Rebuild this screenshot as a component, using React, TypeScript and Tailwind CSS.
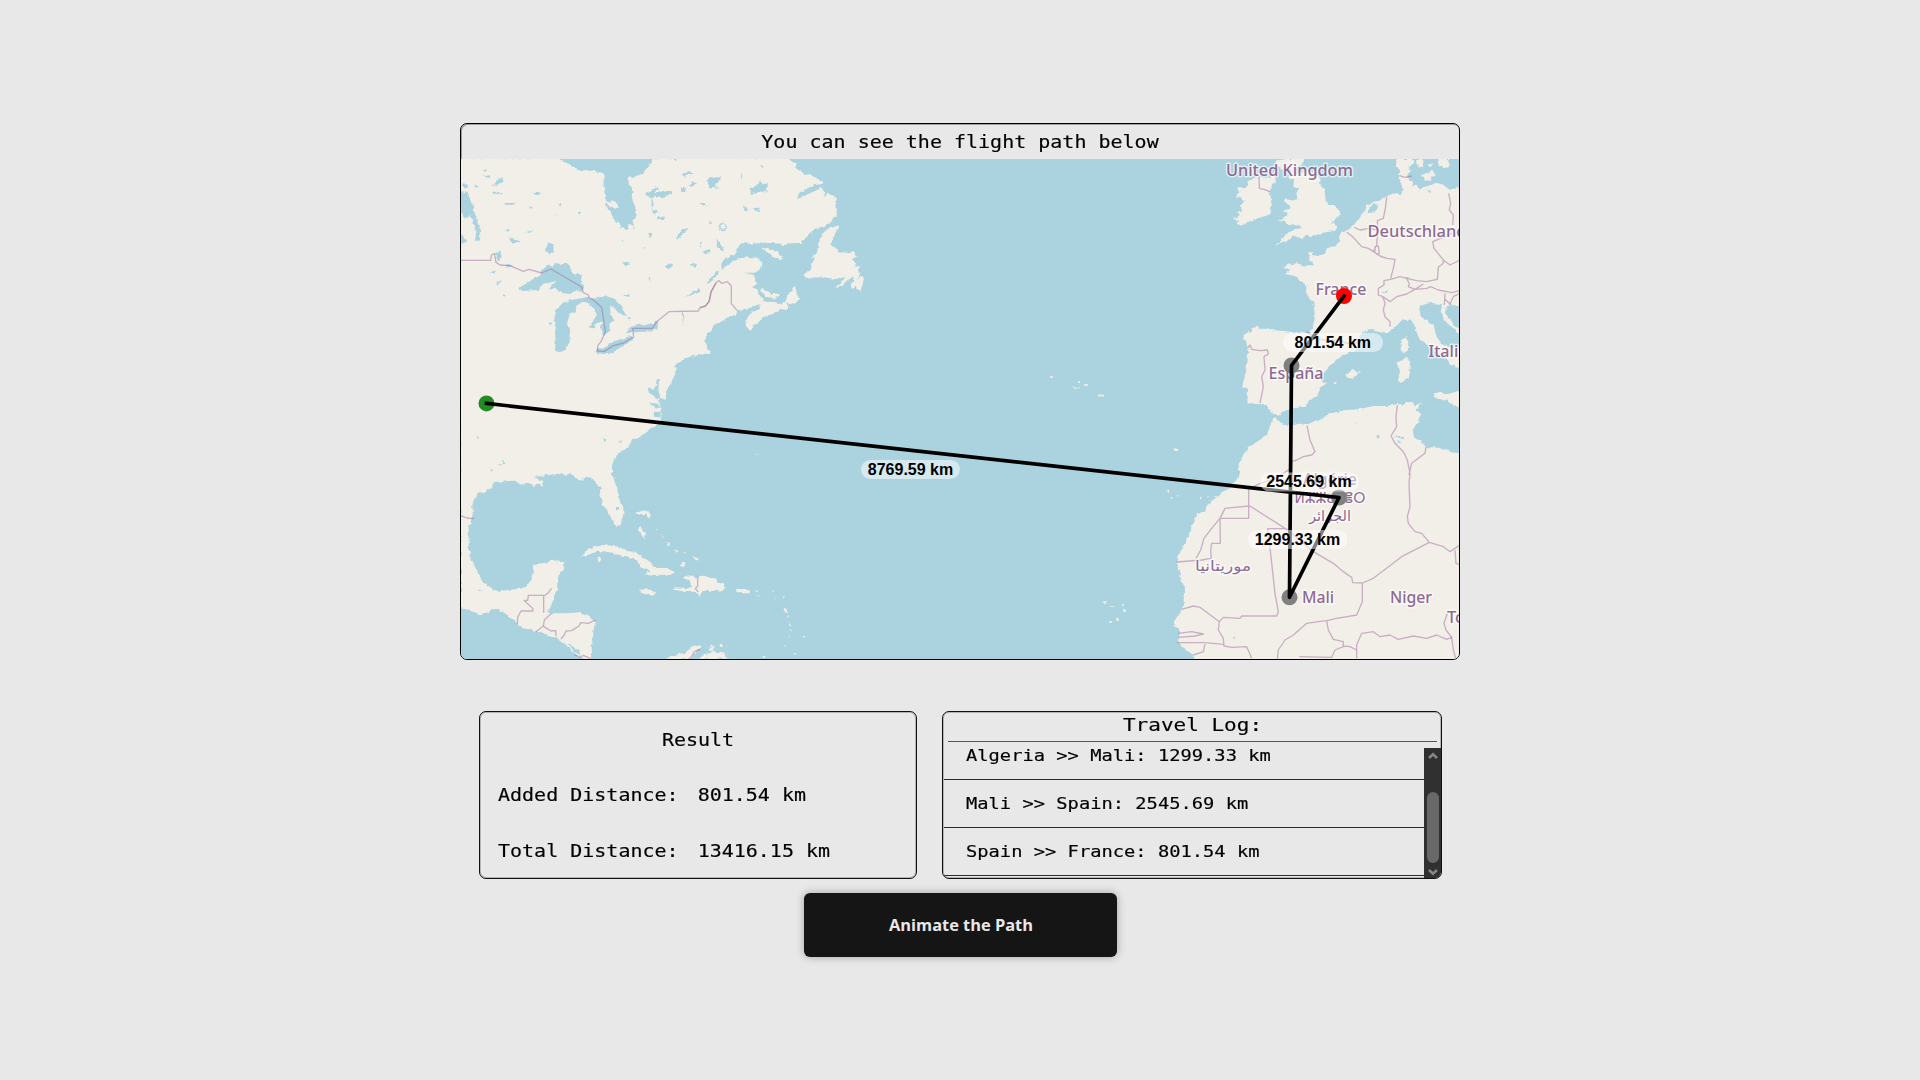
import React from "react";

const LAND = "#f2efe9";
const WATER = "#aad3df";

const mono = "font-['DejaVu_Sans_Mono',monospace] text-black";

// Wide, low letterforms: full advance width with a reduced height.
const squat = "inline-block whitespace-pre scale-y-[0.88] [-webkit-text-stroke:0.2px_#000]";

type Group = { at: string; land: string[]; water: string[]; borders: string[] };

// Each sheet is traced at three units per pixel and placed by its own origin.
const sheets: Group[] = [
  {
    at: "translate(455 115) scale(0.33333)",
    land: [
      "M15,130H310L326,140 345,148 360,158 378,166 405,166 430,170 447,176 450,184 446,196 446,215 451,232 450,250 455,260 450,270 456,282 468,291 468,302 482,314 490,325 496,338 506,337 512,345 517,342 522,325 530,330 537,340 539,332 533,322 540,312 545,300 540,290 541,275 536,265 530,245 532,228 529,215 521,208 521,197 515,190 530,187 548,182 562,174 576,160 586,145 592,132V130H800V618L775,632 768,650 752,660 754,672 745,680 752,690 750,700 765,707 768,717 745,716 720,722 690,730 668,745 660,750 664,760 662,775 652,795 645,810 636,823 632,850H15Z",
      "M452,262L470,259 485,264 492,280 475,277 458,270Z",
    ],
    water: [
      "M15,225L26,232 38,230 42,245 50,258 55,280 62,300 68,325 78,345 77,360 70,378 60,376 64,350 60,338 52,325 55,315 40,300 36,312 20,298 15,296Z",
      "M15,355L27,365 36,378 28,386 15,387Z",
      "M188,524L215,500 250,485 262,466 283,450 295,455 300,443 318,448 342,446 350,470 362,485 363,476 382,478 378,495 388,515 382,530 360,525 345,534 312,530 300,518 282,521 305,497 285,503 262,510 248,525 208,528Z",
      "M272,390L283,382 295,389 296,412 284,419 271,408Z",
      "M300,705L302,680 300,655 304,628 298,612 310,590 322,570 345,556 378,550 400,547 425,551 450,543 480,552 498,570 513,603 495,598 480,582 465,572 468,598 476,615 464,625 463,650 445,662 438,640 441,620 426,625 416,640 403,638 418,615 424,590 410,574 395,562 375,566 365,572 360,592 345,596 336,625 341,640 345,670 336,702 316,712Z",
      "M296,612L305,585 325,562 336,558 318,585Z",
      "M420,712L430,695 440,702 470,682 505,670 530,662 534,676 500,695 462,717 440,716Z",
      "M513,655L530,634 560,628 590,627 610,618 607,640 590,649 540,652Z",
      "M690,550L715,530 745,517 765,492 790,466V482L765,515 748,521 718,536Z",
      "M665,380L668,358 682,342 697,340 690,352 678,362Z",
      "M112,214L128,195 145,186 142,200 128,208Z",
      "M162,370L180,376 200,378 185,385 168,381Z",
      "M233,230L252,231 254,240 240,239Z",
      "M570,238L590,228 600,214 612,220 600,232 650,228 652,236 620,246 600,243 590,250Z",
      "M590,250L596,265 592,285 612,290 604,300 590,290Z",
      "M680,180L705,168 712,174 690,185ZM675,222L688,218 692,230 680,232ZM702,212L714,198 726,206 710,215Z",
      "M755,200L770,188 780,190V228L765,215Z",
      "M606,306L630,305 628,312 608,312ZM580,358L592,353 594,362 584,366ZM628,456L645,443 655,452 640,462ZM708,448L720,444 726,455 716,459Z",
      "M500,440L512,438 525,448 512,454ZM112,230L138,231 136,236 114,236ZM148,264L178,264 178,269 150,269ZM55,212L74,213 72,217 57,217Z",
      "M104,474L122,466 118,478ZM120,415L136,405 140,430 125,440ZM215,350L238,346 222,354ZM150,345L165,342 160,350ZM152,444L174,452 160,458Z",
      "M82,184L104,181 102,188ZM82,166L98,163 96,172ZM24,205L40,208 36,220 20,214ZM218,276L232,275 230,281ZM295,300L308,299 308,304ZM310,264L318,264 317,276Z",
      "M746,262L758,268 752,278ZM742,405L765,410 752,418ZM565,395L572,398 570,404ZM580,488L586,486 586,500ZM500,540L524,540 520,546ZM518,605L528,607 524,614ZM680,590H687L684,636Z",
      "M142,538L154,541 150,550ZM122,506L138,495 130,512ZM283,620L292,622 288,632ZM369,291H375V301H369ZM742,375L750,360 747,390ZM500,375L505,376 503,384ZM655,130L665,130 662,137ZM505,132L530,132 512,140Z",
    ],
    borders: [
      "M18,436H107L109,420 118,416 123,442 135,450 165,452 205,469 222,463 260,474 288,462 380,516 385,533 400,540 402,548 415,555 440,577 446,615 451,650 438,680 428,692 428,708 447,710 475,692 505,684 536,666 533,640H592L605,620 642,590 730,588 735,578 752,572 762,560 768,530 783,505",
    ],
  },
  {
    at: "translate(700 115) scale(0.33333)",
    land: [
      "M20,130H265L278,142 290,145 286,158 300,168 312,180 330,178 345,188 372,200 362,208 345,210 325,218 310,228 296,235 288,252 305,248 322,238 345,228 362,216 373,228 370,245 385,235 398,242 410,252 406,275 411,300 400,312 385,330 365,336 345,342 328,355 318,370 300,384 275,385 255,390 220,384 190,383 160,386 125,385 112,395 105,420 88,425 70,435 55,455 40,470 28,495 15,515 0,523 20,517 32,502 50,480 68,462 85,447 105,437 120,430 150,427 172,428 187,440 186,455 172,470 160,474 130,471 150,477 165,485 166,498 173,505 158,515 172,525 178,542 192,552 185,562 165,575 140,580 112,588 108,600 90,602 70,615 50,625 30,632 22,645 0,670V130Z",
      "M0,520L30,505V650H0Z M0,640L15,655 10,675 20,690 22,705 36,712 20,714 12,706 0,708Z",
      "M182,398L205,400 232,412 252,430 238,432 215,424 200,410Z",
      "M186,514L195,528 215,538 240,534 242,542 215,552 195,540 183,528Z",
      "M175,552L192,560 220,561 245,568 257,560 266,575 262,585 240,582 225,595 208,600 188,607 177,620 162,630 156,642 148,646 138,634 136,615 155,592 180,582Z",
      "M285,512L292,525 289,540 302,550 288,562 272,567 257,560 262,540 274,530Z",
      "M412,330L416,342 408,350 402,365 392,390 402,395 415,405 410,415 430,412 445,415 460,408 470,425 455,432 468,445 462,455 482,453 474,465 478,482 472,495 486,482 492,490 483,527 470,522 468,512 455,520 452,508 463,498 460,485 440,497 430,510 405,518 425,500 432,485 415,492 390,490 370,488 345,487 316,492 315,478 328,467 337,445 345,430 333,430 350,415 357,385 372,350 392,335 402,338Z",
    ],
    water: [
      "M20,192L45,186 62,188 60,198 45,210 58,220 40,215 30,222 25,208Z",
      "M152,216L172,212 182,195 192,210 206,206 198,220 202,235 188,228 165,235 152,240Z",
      "M50,370L58,385 70,400 66,408 52,398ZM10,412L28,402 34,410 18,418ZM0,260L14,264 20,275 8,270ZM134,270L142,280 140,290 132,286ZM160,278L176,278 186,288 165,287ZM180,150L190,152 188,160ZM122,175L130,182 126,198ZM28,318L36,322 32,330ZM0,380L6,384 0,398Z",
      "M56,336a13,13 0 1,0 26,0a13,13 0 1,0 -26,0ZM61,336a8,8 0 1,1 16,0a8,8 0 1,1 -16,0Z",
    ],
    borders: ["M0,578L15,575 28,558 34,530 48,503 57,497 65,505 82,500 94,512V565L111,586"],
  },
  {
    at: "translate(455 380) scale(0.33333)",
    land: [
      "M15,-5H640L630,20 622,40 616,60 608,62 616,85 620,105 614,125 600,140 580,150 565,165 548,174 530,180 525,195 508,210 490,222 478,238 471,255 471,280 477,300 484,325 492,345 494,362 505,382 505,402 499,425 497,436 480,437 474,422 462,408 456,388 440,375 442,358 433,348 438,325 425,310 410,293 395,290 375,303 362,292 348,281 330,284 312,281 300,287 285,281 262,288 237,290 250,298 264,302 266,320 245,312 238,318 225,308 200,315 180,302 150,303 130,309 118,305 110,322 90,335 72,338 60,352 52,375 53,400 48,425 41,440 41,480 41,510 52,545 70,580 82,605 110,625 130,636 160,629 200,626 215,618 228,600 233,580 235,558 250,551 270,548 295,541 310,545 328,547 326,565 311,585 306,605 307,625 297,650 288,680 275,698 300,700 340,700 370,697 388,704 402,708 410,718 424,725 416,745 412,790 408,838H390L365,825 345,808 328,790 308,775 270,765 240,752 205,745 185,728 165,712 150,700 130,687 112,688 95,698 75,703 50,694 18,685Z",
      "M612,-5L640,-5 637,25 624,60 618,40 610,12Z",
      "M380,532L392,515 410,503 450,494 490,500 512,512 540,516 560,530 585,545 600,562 640,567 660,577 645,585 595,584 570,587 585,572 555,560 545,542 520,530 480,522 455,514 425,515Z",
      "M552,630L575,627 605,638 600,644 570,643Z",
      "M427,532L436,530 440,541 430,544Z",
      "M680,593L700,586 720,592 745,587 785,600V632H740L732,648 720,635 690,636 652,628 660,622 700,625 712,618 700,600Z",
      "M556,438L568,458 572,478 560,462 552,450ZM675,553L692,546 688,558 674,558ZM712,530L732,536 720,538Z",
      "M540,398L570,391 585,402 582,418 576,402 545,402Z",
      "M632,838L650,828 690,818 705,806 725,794 740,798 722,815 710,838ZM733,838L750,825 785,815V838ZM764,802L775,796 775,812 766,812Z",
    ],
    water: [
      "M480,378H490L493,388 482,392ZM582,22L600,30 606,-5H612L610,30 618,58 600,50 578,35ZM582,66L608,72 616,84 598,82ZM596,95L618,96 616,112 598,110ZM338,793L350,797 372,812 380,828 362,818Z",
      "M64,168L74,172 68,178ZM138,240H145L152,256 144,252ZM105,268L115,270 110,275ZM130,257L138,252 136,260ZM440,174L454,178 448,184ZM490,182L502,182 502,188ZM68,628L80,632 76,638Z",
    ],
    borders: [
      "M18,407L36,414 58,416",
      "M290,625L278,640 270,646H220L218,661H207L234,686V693H198L188,712 187,733M266,646V698M290,700L268,720 265,738 243,755M265,738L275,745 288,753 302,752 303,768M318,777L328,765 333,753 350,752 372,738 377,728 400,730 422,720M358,824L375,832 385,826 407,836M728,592V618L721,626 730,636M736,808L718,815 710,830 700,838",
    ],
  },
  {
    at: "translate(640 380) scale(0.33333)",
    land: [
      "M172,592L190,587 215,595 230,607 250,612 258,625 250,632 220,630 188,633 178,648 168,636Z",
      "M288,627H328L326,640H290Z",
      "M178,836L192,822 230,816 255,822 262,836Z",
      "M430,650l5,0 -2,6zM430,686l12,0 2,10 -8,2zM438,706l6,4 0,5zM446,726l10,10 -2,4zM448,748h8v6zM442,768h6v4zM486,768h8v6zM430,798h8v4zM395,634h6v4zM403,654l6,4 -2,2zM345,630h10l-4,3zM350,645h8v3zM238,795h10v6l-6,0zM254,797h8v5zM365,828h12l-4,6zM458,820h8v4z",
      "M20,392l12,10 -4,14 -6,-2zM38,428l6,6zM46,440l8,10 -4,0zM62,460l10,14 -6,0zM96,468l6,4zM76,484l14,12 -6,2zM102,505l10,6 -4,12zM130,518l8,-4 -2,6zM162,530l14,8 -6,0zM348,222l8,0 -4,3z",
    ],
    water: [],
    borders: [],
  },
  {
    at: "translate(1160 150) scale(0.33333)",
    land: [
      "M228,140L238,125 232,112 255,112 265,108 262,92 285,84 300,80 315,84 340,78 347,95 335,108 325,125 332,140 335,165 328,195 305,200 290,206 270,212 258,222 245,227 228,220 238,212 222,208 240,195 230,187 248,180 240,172 252,150 240,144Z",
      "M378,27H432L430,38 410,52 405,75 430,62 470,70 482,88 480,100 492,118 496,140 497,152 508,165 525,165 538,175 540,190 530,203 515,215 532,232 525,243 500,246 480,250 455,258 440,256 425,265 410,257 395,262 385,275 368,275 345,288 360,272 370,262 385,248 405,237 425,235 420,228 405,222 390,226 375,215 357,213 372,205 383,195 380,185 368,180 388,178 388,162 372,155 375,145 395,152 412,148 410,138 417,115 400,112 402,90 385,85 395,60 365,55 345,45 350,32Z",
      "M710,27H755L765,40 745,50 752,62 742,75 742,88 758,95 755,108 775,108 780,118 810,105 830,98 850,105 870,120 900,112V470L870,462 858,468 855,490 872,510 885,530 900,535V555L880,535 862,520 850,505 845,480 845,462 830,464 815,458 798,462 780,468 778,478 783,500 800,510 822,530 830,560 845,582 865,590 900,592V660L870,642 850,618 825,605 810,590 788,575 775,560 768,540 765,522 750,512 728,508 712,525 692,540 680,552 655,545 635,540 608,545 598,560 605,575 600,595 575,605 545,618 520,640 508,650 495,665 480,680 484,692 498,700 480,715 475,730 470,742 450,748 435,770 400,775 375,780 355,795 342,795 330,782 318,762 300,763 262,758 264,735 262,715 247,710 250,695 258,665 262,640 265,600 260,580 250,555 270,545 275,535 290,530 330,540 370,543 420,548 450,546 458,535 465,500 462,475 460,455 445,440 438,425 440,405 420,392 405,378 375,372 388,362 368,352 380,345 410,340 435,347 462,345 450,330 445,310 460,305 455,315 475,318 495,312 500,295 525,288 538,275 540,250 560,242 575,232 595,210 608,190 620,165 640,155 655,152 680,140 700,130 722,135 728,122 722,95 715,75 722,62 708,48Z",
      "M768,27L790,30 790,50 775,52ZM785,75L800,68 815,62 828,72 810,82 815,92 795,92ZM800,45L820,40 812,52ZM835,27H868L866,50 850,55 838,45Z",
      "M738,560L745,575 743,600 732,610 722,600 722,572ZM740,620L750,635 747,685 722,698 714,692 720,665 710,640Z",
      "M820,735L840,728 865,732 900,722V768L885,770 860,752 830,745ZM555,676L578,660 596,672 574,687 565,682ZM592,662L606,666 600,670ZM520,700L530,695 528,706Z",
    ],
    water: [
      "M655,165L640,160 622,185 632,190 650,180ZM735,382L748,380 745,388ZM665,428L685,420 678,430ZM800,122L812,120 806,128Z",
    ],
    borders: [
      "M297,82L298,115 312,118 330,125M680,142L676,175 670,205 652,212 653,240 650,285 640,305M583,232L600,240 628,235 652,240M560,247L580,262 605,290 625,295 640,305 660,318 680,325 705,328 700,355 692,385M645,305L645,290 655,288 658,310 648,312M718,77L735,82 755,78M866,130L872,160 868,180 880,195 878,225M875,250L850,262 818,275 822,295 850,330 850,340M850,330L870,345 900,330M850,340L835,352 832,388 800,395 770,392 740,385 720,380 692,388 672,392 672,405 655,415 655,435 668,440 690,455 710,440 740,432 765,418 790,402M740,385L748,402 745,410 765,418M765,418L800,415 812,410 835,420 875,428 900,422M668,440L675,460 670,480 675,500 690,515 690,530M855,430L853,465M855,448L870,462 880,440 900,430",
      "M262,595L270,585 275,598 300,602 322,600 325,612 312,620 315,660 305,680 310,710 300,760M440,545L470,565 500,572 540,570 560,580 602,578",
    ],
  },
  {
    at: "translate(1160 400) scale(0.33333)",
    land: [
      "M345,50L362,68 385,76 410,70 440,75 465,62 490,56 510,40 560,30 600,27 640,18 680,18 715,12 735,15 740,5 755,8 765,15 788,10 770,28 782,42 778,62 758,90 762,110 790,128 800,142 840,142 870,155 900,160V780H105L90,755 65,745 52,718 60,700 50,682 40,668 58,640 72,615 70,590 75,560 60,540 62,520 50,495 55,470 72,435 90,400 103,360 110,345 135,330 150,305 180,285 205,265 228,242 240,225 235,195 252,160 270,138 300,120 322,100 335,65Z",
      "M220,305l16,-14 6,0 -8,14 -10,6zM165,290l16,-4 -4,10 -8,4zM120,285l6,8 -5,6zM22,270l4,8zM40,147l14,2 -6,5zM50,285l6,1 -3,4zM138,290h10l-6,6zM30,292h6v5zM22,269l6,0 0,9 -4,1zM870,-2L900,0V22Z",
    ],
    water: [
      "M700,110L730,108 735,113 705,114ZM710,124H722V128H710ZM650,105H658V112H650ZM582,68H592L588,72ZM870,710H878V718H870ZM220,710H226V716H220ZM66,760L76,755 80,762 70,768Z",
    ],
    borders: [
      "M441,77L450,120 465,155 455,165 430,170 410,180 395,185 393,205 370,220 350,235 300,250 266,268V355H180L181,430H155L152,450 154,475 125,480 50,486M265,318L195,325 180,355 155,385 132,415 122,450 108,475M265,315L380,388 460,455 520,490 550,515 575,532 578,548 607,549 640,535 725,470 808,427 785,400 765,395 745,370 742,350 750,320 747,250 750,220 742,180 730,155 705,130 693,108 710,80 708,50 712,15M747,225L755,190 795,160 798,140M808,427L850,440 870,455 900,435M885,450L888,490 900,495M607,549V605L590,645 530,655 500,662 475,665 440,670 400,705 375,720 355,750 352,778M380,386H323L333,470 345,580 355,635 350,648H245L240,655 190,652 178,665 120,622 100,618 65,628M178,665L175,690 190,715 192,738 215,742 260,740 275,775M55,700L95,695 130,702 105,708 55,712M52,728H135L190,733M135,732L130,755 100,765M500,662L505,690 520,718 550,725 550,740 525,750 515,772 418,770M550,738L570,740 590,750M590,775L590,735 605,700 640,695 660,710 690,705 715,718 760,708 800,715 830,705 860,718 875,712 858,690 852,670 862,640M875,712L880,750 888,778",
    ],
  },
];

type Place = { name: string; x: number; y: number; w?: number; size?: number; arabic?: boolean };

const places: Place[] = [
  { name: "United Kingdom", x: 1289.5, y: 175.5, w: 127 },
  { name: "Deutschland", x: 1417, y: 236.5, w: 99 },
  { name: "France", x: 1341, y: 294.5, w: 51 },
  { name: "España", x: 1296, y: 378.5, w: 55 },
  { name: "Italia", x: 1448, y: 357, w: 39 },
  { name: "Algérie", x: 1330, y: 484.5, w: 54 },
  { name: "ⵍⵣⵣⴰⵢⴻⵔ", x: 1330, y: 502.5, w: 71, size: 14.5, arabic: true },
  { name: "الجزائر", x: 1330, y: 521, w: 42, size: 15, arabic: true },
  { name: "موريتانيا", x: 1223, y: 571, w: 56, size: 15, arabic: true },
  { name: "Mali", x: 1318, y: 603, w: 32 },
  { name: "Niger", x: 1411, y: 603, w: 42 },
  { name: "Tchad", x: 1470, y: 623, w: 46 },
];

const stops = [
  { x: 486.5, y: 403.4, fill: "#228b22" },
  { x: 1339, y: 497.5, fill: "#808080" },
  { x: 1289.5, y: 597.3, fill: "#808080" },
  { x: 1291.5, y: 365.5, fill: "#808080" },
  { x: 1344, y: 296, fill: "#ff0000" },
];

const tags = [
  { text: "8769.59 km", x: 861, y: 460, w: 99, tx: 910.5 },
  { text: "1299.33 km", x: 1248, y: 530, w: 99.5, tx: 1297.5 },
  { text: "2545.69 km", x: 1260, y: 472.5, w: 99, tx: 1309 },
  { text: "801.54 km", x: 1283, y: 333, w: 100, tx: 1332.8 },
];

function FlightMap() {
  return (
    <svg viewBox="461 159 998 500" width={998} height={500} className="block rounded-b-[5px]">
      <defs>
        <filter id="coast" filterUnits="userSpaceOnUse" x="451" y="149" width="1018" height="520" colorInterpolationFilters="sRGB">
          <feTurbulence type="fractalNoise" baseFrequency="0.22" numOctaves={2} seed={4} result="noise" />
          <feDisplacementMap in="SourceGraphic" in2="noise" scale={4} xChannelSelector="R" yChannelSelector="G" />
          <feGaussianBlur stdDeviation={0.45} />
        </filter>
      </defs>
      <rect x="461" y="159" width="998" height="500" fill={WATER} />
      <g filter="url(#coast)">
        <rect x="445" y="145" width="1030" height="530" fill={WATER} />
        {sheets.map((s, i) => (
          <g key={i} transform={s.at}>
            {s.land.map((d, j) => (
              <path key={"l" + j} d={d} fill={LAND} />
            ))}
            {s.water.map((d, j) => (
              <path key={"w" + j} d={d} fill={WATER} fillRule="evenodd" />
            ))}
          </g>
        ))}
        <path d="M456,150H470V340H456ZM456,340H470V607H456Z" fill={LAND} opacity={0} />
      </g>
      {sheets.map((s, i) => (
        <g key={i} transform={s.at}>
          {s.borders.map((d, j) => (
            <path key={j} d={d} fill="none" stroke="#9b6b98" strokeOpacity={0.48} strokeWidth={4} strokeLinejoin="round" />
          ))}
        </g>
      ))}
      <g fill={LAND} opacity={0.8}>
        <path d="M1050,376h3v2h-3zM1072,386l5,2 3,-1 0,1 -5,1zM1078,381h2v2h-2zM1084,384h4v2h-4zM1098,394.500h6v2h-6zM1174,449h4v2h-4zM1103,601h4l-1,3h-2zM1110,606h4v1h-4zM1123,609h3v3h-3zM1116,618h3v3h-3zM1109,621h3v2h-3zM1122,604h2v2h-2z" />
      </g>
      {places.map((p) => (
        <text
          key={p.name}
          x={p.x}
          y={p.y}
          fontSize={p.size ?? 16}
          textLength={p.w}
          lengthAdjust="spacingAndGlyphs"
          textAnchor="middle"
          fill="#8d6a93"
          stroke="#ffffff"
          strokeOpacity={0.65}
          strokeWidth={3}
          strokeLinejoin="round"
          paintOrder="stroke"
          className={p.arabic ? "font-['DejaVu_Sans',sans-serif]" : "font-['Noto_Sans',sans-serif] font-medium"}
        >
          {p.name}
        </text>
      ))}
      {stops.map((s) => (
        <circle key={s.x} cx={s.x} cy={s.y} r={8} fill={s.fill} />
      ))}
      <path
        d={"M" + stops.map((s) => s.x + "," + s.y).join("L")}
        fill="none"
        stroke="#000000"
        strokeWidth={3.7}
        strokeLinejoin="round"
        strokeLinecap="square"
      />
      {tags.map((t) => (
        <g key={t.text}>
          <rect x={t.x} y={t.y} width={t.w} height={19} rx={9.5} fill="#ffffff" fillOpacity={0.5} />
          <text x={t.tx} y={Math.floor(t.y) + 15} textAnchor="middle" fontSize={16} className="font-['Liberation_Sans',sans-serif] font-bold">
            {t.text}
          </text>
        </g>
      ))}
    </svg>
  );
}

const log = ["Algeria >> Mali: 1299.33 km", "Mali >> Spain: 2545.69 km", "Spain >> France: 801.54 km"];

function Arrow({ down }: { down?: boolean }) {
  return (
    <svg width={12} height={8} viewBox="0 0 12 8" className={down ? "rotate-180" : ""}>
      <path d="M2,6L6,2.3 10,6" fill="none" stroke="#868686" strokeWidth={2.6} />
    </svg>
  );
}

export default function App() {
  return (
    <div className="flex h-[1080px] w-full flex-col items-center overflow-hidden bg-[#e8e8e8] pt-[123px]">
      <section className="h-[537px] w-[1000px] overflow-hidden rounded-[7px] border border-black shadow-[inset_1px_1px_0_#a0a0a0]">
        <h1 className={`${mono} flex h-[35px] items-center justify-center text-[20px]`}>
          <span className={squat}>You can see the flight path below</span>
        </h1>
        <FlightMap />
      </section>

      <div className="mt-[51px] flex gap-[25px] pl-px">
        <section
          className={`${mono} flex h-[168px] w-[438px] flex-col rounded-[7px] border border-[#111] px-[18px] pt-[11px] text-[20px] shadow-[inset_0_0_0_1px_#b4b4b4]`}
        >
          <h2 className="text-center leading-[34px]">
            <span className={squat}>Result</span>
          </h2>
          <p className="mt-[21px] flex gap-[19px] leading-[34px]">
            <span className={squat}>Added Distance:</span>
            <span className={squat}>801.54 km</span>
          </p>
          <p className="mt-[22px] flex gap-[19px] leading-[34px]">
            <span className={squat}>Total Distance:</span>
            <span className={squat}>13416.15 km</span>
          </p>
        </section>

        <section className="flex h-[168px] w-[500px] flex-col overflow-hidden rounded-[7px] border border-[#111] shadow-[inset_0_0_0_1px_#b4b4b4]">
          <h2 className={`${mono} ml-[5px] mr-[4px] h-[30px] border-b border-[#555] text-center text-[21px] leading-[26px]`}>
            <span className={squat}>Travel Log:</span>
          </h2>
          <div className="mt-[6px] flex h-[130px] pl-px">
            <ul className="flex h-[130px] grow flex-col justify-end overflow-hidden pb-[2px]">
              {log.map((row) => (
                <li
                  key={row}
                  className={`${mono} h-12 shrink-0 border-b border-[#3a2323] pl-[22px] text-[18.75px] leading-[47px]`}
                >
                  <span className={squat}>{row}</span>
                </li>
              ))}
            </ul>
            <div className="flex w-[17px] flex-col items-center bg-[#303030]">
              <div className="flex h-[15px] items-center">
                <Arrow />
              </div>
              <div className="mt-[29px] h-[71px] w-[12px] rounded-full bg-[#686868]" />
              <div className="mt-[5px]">
                <Arrow down />
              </div>
            </div>
          </div>
        </section>
      </div>

      <button className="mt-[14.4px] ml-px h-[64px] w-[313px] rounded-[6px] bg-[#151515] pl-px font-['Open_Sans',sans-serif] text-[16.4px] font-bold text-[#e8e8e8] shadow-[0_0_8px_rgba(0,0,0,0.3)]">
        Animate the Path
      </button>
    </div>
  );
}
